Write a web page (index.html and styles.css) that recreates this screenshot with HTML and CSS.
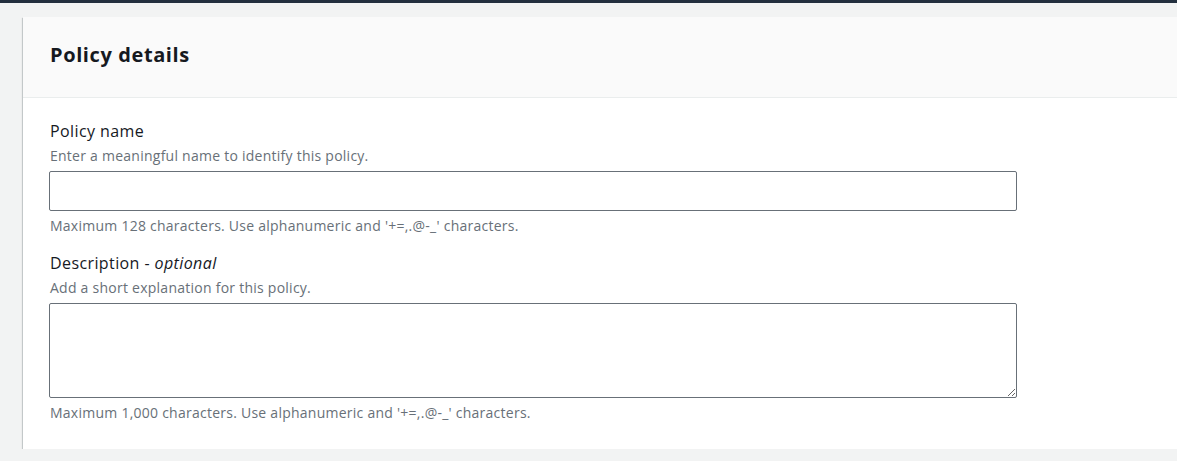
FILE: index.html
```html
<!DOCTYPE html>
<html lang="en">
<head>
    <meta charset="UTF-8">
    <meta name="viewport" content="width=device-width, initial-scale=1.0">
    <title>Policy details</title>
    <link rel="stylesheet" href="styles.css">
</head>
<body>

    <div class="topbar"></div>

    <div class="main">
        <div class="card">
            <div class="card-header">
                <h2>Policy details</h2>
            </div>
            <div class="card-body">
                <div class="field">
                    <label class="field-label" for="policyName">Policy name</label>
                    <div class="field-desc">Enter a meaningful name to identify this policy.</div>
                    <input type="text" id="policyName" class="text-input">
                    <div class="field-hint">Maximum 128 characters. Use alphanumeric and '+=,.@-_' characters.</div>
                </div>
                <div class="field">
                    <label class="field-label" for="policyDesc">Description - <i>optional</i></label>
                    <div class="field-desc">Add a short explanation for this policy.</div>
                    <textarea id="policyDesc" class="text-area"></textarea>
                    <div class="field-hint">Maximum 1,000 characters. Use alphanumeric and '+=,.@-_' characters.</div>
                </div>
            </div>
        </div>
    </div>

</body>
</html>
```

FILE: styles.css
```css
html, body {
    margin: 0;
    padding: 0;
    overflow: hidden;
}
body {
    background-color: #f2f3f3;
    font-family: "Open Sans", "Noto Sans", sans-serif;
    color: #16191f;
}
.topbar {
    height: 3px;
    background-color: #232f3e;
}
.main {
    padding: 14px 0 0 23px;
}
.card {
    background-color: #fff;
    margin-right: -20px;
    box-shadow: 0 1px 1px 0 rgba(0, 28, 36, 0.3), 1px 1px 1px 0 rgba(0, 28, 36, 0.15), -1px 1px 1px 0 rgba(0, 28, 36, 0.15);
}
.card-header {
    background-color: #fafafa;
    border-bottom: 1px solid #eaeded;
    height: 81px;
    box-sizing: border-box;
    padding: 0 27px 4px;
    display: flex;
    align-items: center;
}
.card-header h2 {
    margin: 0;
    font-size: 20px;
    font-weight: 700;
    line-height: 28px;
    letter-spacing: 0.6px;
}
.card-body {
    padding: 22px 27px 26px 26px;
}
.field + .field {
    margin-top: 16px;
}
.field-label {
    display: block;
    font-size: 16px;
    line-height: 22px;
    margin-left: 1px;
    letter-spacing: 0.4px;
}
.field-desc, .field-hint {
    font-size: 14px;
    line-height: 20px;
    color: #687078;
    margin-left: 1px;
    letter-spacing: 0.25px;
}
.field-desc {
    margin-top: 4px;
    margin-bottom: 5px;
}
.field-hint {
    margin-top: 5px;
}
.text-input, .text-area {
    display: block;
    box-sizing: border-box;
    width: 968px;
    border: 1px solid #687078;
    border-radius: 2px;
    background: #fff;
    font-family: inherit;
    font-size: 14px;
    margin: 0;
}
.text-input {
    height: 40px;
}
.text-area {
    height: 95px;
}
```
